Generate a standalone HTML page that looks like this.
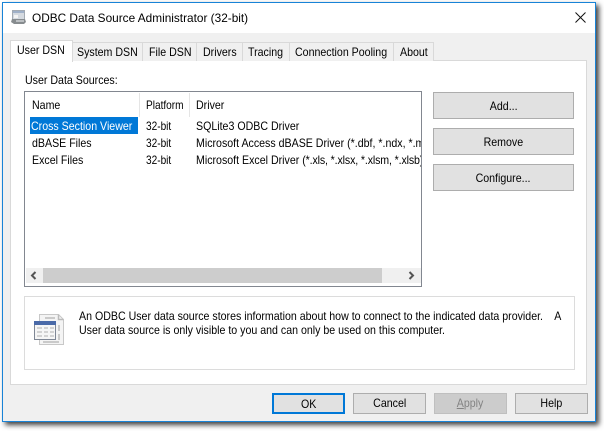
<!DOCTYPE html>
<html><head><meta charset="utf-8"><style>
html,body{margin:0;padding:0;width:604px;height:431px;overflow:hidden;background:#fff}
body{position:relative;font:12px/14px "Liberation Sans",sans-serif;color:#000}
div,span.t{position:absolute;box-sizing:border-box}
span.t{white-space:nowrap;transform:scaleX(.885);transform-origin:0 0}
.tab{background:#f0f0f0;border:1px solid #d9d9d9;border-bottom:none;top:42px;height:19px}
.btn{background:#e1e1e1;border:1px solid #adadad;text-align:center;line-height:26px;white-space:nowrap}
.btn b{font-weight:normal;display:inline-block;transform:scaleX(.885);transform-origin:50% 0}
.b2{top:393px;height:21px;width:73px;line-height:19px}
.clip{overflow:hidden;white-space:nowrap;height:16px}
.clip b{font-weight:normal;display:inline-block;transform:scaleX(.885);transform-origin:0 0}
</style></head><body>
<div style="left:2px;top:2px;width:594px;height:420px;box-shadow:3px 3px 5px rgba(0,0,0,.75)"></div>
<div style="left:2px;top:2px;width:594px;height:420px;background:#f0f0f0;border:1.5px solid #1883d7"></div>
<div style="left:3px;top:3px;width:592px;height:30px;background:#fff"></div>
<svg style="position:absolute;left:11px;top:9px" width="16" height="16" viewBox="0 0 16 16"><path d="M1.500 1.500h12v9h-12z" fill="#d5dae0" stroke="#a3aab2"/><path d="M2 2h11v2H2z" fill="#9fb0c8"/><path d="M3 6h4v3H3z" fill="#f4f4f4"/><path d="M1 10h13l1 3-2 2H3l-3-2z" fill="#878c8f"/><path d="M5 11h8v2H5z" fill="#bcc0c3"/></svg>
<span class="t" style="left:32px;top:11px;transform:scaleX(.985)">ODBC Data Source Administrator (32-bit)</span>
<svg style="position:absolute;left:575px;top:12px" width="11" height="11" viewBox="0 0 11 11"><path d="M.5.5l10 10M10.500.5l-10 10" stroke="#111" stroke-width="1" fill="none"/></svg>

<div style="left:10px;top:60px;width:577px;height:325px;background:#fff;border:1px solid #d9d9d9"></div>
<div class="tab" style="left:72px;width:71px"></div>
<div class="tab" style="left:142px;width:55px"></div>
<div class="tab" style="left:196px;width:47px"></div>
<div class="tab" style="left:242px;width:48px"></div>
<div class="tab" style="left:289px;width:105px"></div>
<div class="tab" style="left:393px;width:41px"></div>
<div class="tab" style="left:10px;top:40px;width:63px;height:22px;background:#fff;z-index:2"></div>
<span class="t" style="left:17px;top:43px;z-index:3">User DSN</span>
<span class="t" style="left:77px;top:45px">System DSN</span>
<span class="t" style="left:149px;top:45px">File DSN</span>
<span class="t" style="left:203px;top:45px">Drivers</span>
<span class="t" style="left:248px;top:45px">Tracing</span>
<span class="t" style="left:295px;top:45px">Connection Pooling</span>
<span class="t" style="left:400px;top:45px">About</span>

<span class="t" style="left:25px;top:73px">User Data Sources:</span>
<div style="left:24px;top:91px;width:398px;height:196px;background:#fff;border:1px solid #828790"></div>
<div style="left:139px;top:93px;width:1px;height:24px;background:#e5e5e5"></div>
<div style="left:189px;top:93px;width:1px;height:24px;background:#e5e5e5"></div>
<span class="t" style="left:32px;top:98px">Name</span>
<span class="t" style="left:146px;top:98px;transform:scaleX(.84)">Platform</span>
<span class="t" style="left:196px;top:98px">Driver</span>
<div style="left:30px;top:117px;width:108px;height:17px;background:#0078d7"></div>
<span class="t" style="left:31px;top:119px;color:#fff">Cross Section Viewer</span>
<span class="t" style="left:146px;top:119px;transform:scaleX(.84)">32-bit</span>
<span class="t" style="left:196px;top:119px">SQLite3 ODBC Driver</span>
<span class="t" style="left:32px;top:136px">dBASE Files</span>
<span class="t" style="left:146px;top:136px;transform:scaleX(.84)">32-bit</span>
<div class="clip" style="left:196px;top:136px;width:225px"><b>Microsoft Access dBASE Driver (*.dbf, *.ndx, *.mdx)</b></div>
<span class="t" style="left:32px;top:153px">Excel Files</span>
<span class="t" style="left:146px;top:153px;transform:scaleX(.84)">32-bit</span>
<div class="clip" style="left:196px;top:153px;width:225px"><b>Microsoft Excel Driver <span style="letter-spacing:-.15px">(*.xls, *.xlsx, *.xlsm, *.xlsb)</span></b></div>
<div style="left:26px;top:268px;width:395px;height:15px;background:#f0f0f0"></div>
<div style="left:43px;top:268px;width:339px;height:15px;background:#cdcdcd"></div>
<svg style="position:absolute;left:30px;top:271px" width="8" height="9" viewBox="0 0 8 9"><path d="M5.500 1L2 4.500 5.500 8" fill="none" stroke="#555" stroke-width="2"/></svg>
<svg style="position:absolute;left:407px;top:271px" width="8" height="9" viewBox="0 0 8 9"><path d="M2.500 1L6 4.500 2.500 8" fill="none" stroke="#555" stroke-width="2"/></svg>

<div class="btn" style="left:433px;top:92px;width:141px;height:27px"><b>Add...</b></div>
<div class="btn" style="left:433px;top:128px;width:141px;height:27px"><b>Remove</b></div>
<div class="btn" style="left:433px;top:164px;width:141px;height:27px"><b>Configure...</b></div>

<div style="left:24px;top:296px;width:551px;height:74px;background:#fff;border:1px solid #dcdcdc"></div>
<svg style="position:absolute;left:33px;top:313px" width="32" height="33" viewBox="0 0 32 33"><path d="M6.500 1.500h19l5 5v25h-24z" fill="#f4f4f4" stroke="#c8c8c8"/><path d="M12 5h10M25.500 1.500v5h5M26 12v6M26 21v6M10 29h16" stroke="#bbb" stroke-width="1.500" fill="none"/><rect x="1.500" y="8.500" width="21" height="18" fill="#f6f6f6" stroke="#7f8795"/><rect x="1" y="8" width="22" height="4" fill="#4a6aa8"/><path d="M4 15h5M11 15h4M17 15h4M4 19h5M11 19h4M17 19h4M4 23h5M11 23h4M17 23h4" stroke="#b0b0b0"/></svg>
<span class="t" style="left:79px;top:309px">An ODBC User data source stores information about how to connect to the indicated data provider.&nbsp;&nbsp;&nbsp; A</span>
<span class="t" style="left:79px;top:323px">User data source is only visible to you and can only be used on this computer.</span>

<div class="btn b2" style="left:272px;border:2px solid #0078d7;line-height:18px"><b>OK</b></div>
<div class="btn b2" style="left:353px"><b>Cancel</b></div>
<div class="btn b2" style="left:434px;background:#ccc;border-color:#bfbfbf;color:#838383"><b><u>A</u>pply</b></div>
<div class="btn b2" style="left:515px"><b>Help</b></div>
</body></html>
